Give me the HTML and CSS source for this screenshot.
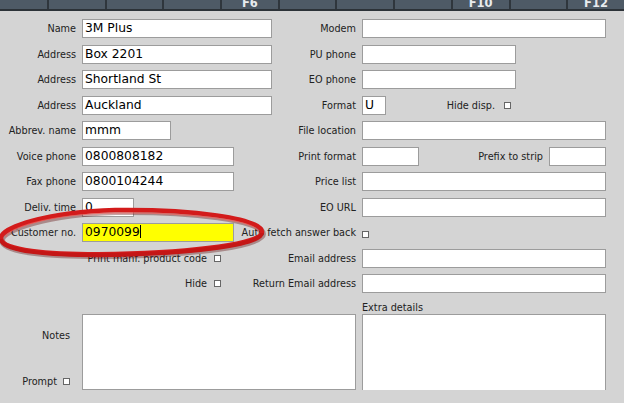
FILE: index.html
```html
<!DOCTYPE html>
<html lang="en">
<head>
    <meta charset="UTF-8">
    <title>Supplier details</title>
    <link rel="stylesheet" href="styles.css">
</head>
<body>
    <div class="fkeys">
        <div class="fkey"></div>
        <div class="fkey"></div>
        <div class="fkey"></div>
        <div class="fkey"></div>
        <div class="fkey"><span>F6</span></div>
        <div class="fkey"></div>
        <div class="fkey"></div>
        <div class="fkey"></div>
        <div class="fkey"><span>F10</span></div>
        <div class="fkey"></div>
        <div class="fkey"><span>F12</span></div>
    </div>

    <div class="page">
        <div class="row">
            <span class="label">Name</span>
            <div class="field w-long">3M Plus</div>
            <span class="label">Modem</span>
            <div class="field w-full"></div>
        </div>
        <div class="row">
            <span class="label">Address</span>
            <div class="field w-long">Box 2201</div>
            <span class="label">PU phone</span>
            <div class="field w-phone"></div>
        </div>
        <div class="row">
            <span class="label">Address</span>
            <div class="field w-long">Shortland St</div>
            <span class="label">EO phone</span>
            <div class="field w-phone"></div>
        </div>
        <div class="row">
            <span class="label">Address</span>
            <div class="field w-long">Auckland</div>
            <span class="label">Format</span>
            <div class="split">
                <div class="field w-tiny">U</div>
                <div class="check-group hide-disp">
                    <span class="label">Hide disp.</span>
                    <span class="check"></span>
                </div>
            </div>
        </div>
        <div class="row">
            <span class="label">Abbrev. name</span>
            <div class="field w-abbrev">mmm</div>
            <span class="label">File location</span>
            <div class="field w-full"></div>
        </div>
        <div class="row">
            <span class="label">Voice phone</span>
            <div class="field w-mid">0800808182</div>
            <span class="label">Print format</span>
            <div class="split">
                <div class="field w-small"></div>
                <div class="check-group">
                    <span class="label">Prefix to strip</span>
                    <div class="field w-small"></div>
                </div>
            </div>
        </div>
        <div class="row">
            <span class="label">Fax phone</span>
            <div class="field w-mid">0800104244</div>
            <span class="label">Price list</span>
            <div class="field w-full"></div>
        </div>
        <div class="row">
            <span class="label">Deliv. time</span>
            <div class="field w-deliv">0</div>
            <span class="label">EO URL</span>
            <div class="field w-full"></div>
        </div>
        <div class="row">
            <span class="label">Customer no.</span>
            <div class="field w-mid focused">0970099<span class="caret"></span></div>
            <span class="label">Auto fetch answer back</span>
            <div><span class="check"></span></div>
        </div>
        <div class="row">
            <div class="check-group left-check">
                <span class="label">Print manf. product code</span>
                <span class="check"></span>
            </div>
            <span class="label">Email address</span>
            <div class="field w-full"></div>
        </div>
        <div class="row">
            <div class="check-group left-check">
                <span class="label">Hide</span>
                <span class="check"></span>
            </div>
            <span class="label">Return Email address</span>
            <div class="field w-full"></div>
        </div>

        <div class="row row-head">
            <span class="label head-label">Extra details</span>
        </div>
        <div class="notes-row">
            <div class="notes-side">
                <span class="label">Notes</span>
                <div class="check-group">
                    <span class="label">Prompt</span>
                    <span class="check"></span>
                </div>
            </div>
            <textarea class="box" readonly></textarea>
            <textarea class="box" readonly></textarea>
        </div>

        <!-- red marker ring drawn over the customer number -->
        <svg class="mark" viewBox="0 190 270 80" width="270" height="80">
            <path class="ring-shadow" d="M 1,238 C 1,228 45,212 115,210 C 190,209 262,218 262,232 C 262,244 195,252 115,254 C 45,255 1,250 1,238 Z"/>
            <path class="ring" d="M 1,238 C 1,228 45,212 115,210 C 190,209 262,218 262,232 C 262,244 195,252 115,254 C 45,255 1,250 1,238 Z"/>
            <path class="ring-low" d="M 262,233 C 262,245 195,253 115,255 C 45,256 1,251 1,239"/>
            <path class="ring-shine" d="M 6,237 C 6,229 48,214 115,213 C 186,212 257,220 258,232"/>
        </svg>
    </div>
</body>
</html>
```

FILE: styles.css
```css
body {
    margin: 0;
    background: #d4d4d4;
    font-family: "DejaVu Sans", Verdana, sans-serif;
    color: #222;
}
.fkeys {
    display: flex;
    height: 9px;
    background: #4e5a66;
    border-bottom: 2px solid #2c3238;
    overflow: hidden;
}
.fkey {
    flex: 0 0 57.7px;
    box-sizing: border-box;
    border-right: 2px solid #2f363d;
    color: #e8ebee;
    font-weight: bold;
    font-size: 11.5px;
    line-height: 12px;
    text-align: center;
}
.fkey:first-child {
    flex-basis: 49px;
}
.fkey span {
    display: block;
    margin-top: -3px;
}
.page {
    position: relative;
    padding: 8px 18px 0 0;
}
.row {
    display: grid;
    grid-template-columns: 76px minmax(0, 1fr) auto 244px;
    column-gap: 6px;
    align-items: center;
    height: 19px;
    margin-bottom: 6.5px;
}
.label {
    font-size: 9.7px;
    text-align: right;
    white-space: nowrap;
}
.field {
    box-sizing: border-box;
    height: 19px;
    border: 1px solid #9c9c9c;
    background: #fff;
    color: #000;
    font-size: 12.3px;
    line-height: 17px;
    padding: 0 2px;
    white-space: nowrap;
    overflow: hidden;
}
.w-long { width: 190px; }
.w-mid { width: 152px; }
.w-abbrev { width: 89px; }
.w-deliv { width: 52px; }
.w-full { width: 244px; }
.w-phone { width: 154px; }
.w-tiny { width: 24px; }
.w-small { width: 57px; }
.focused {
    background: #ffff00;
}
.caret {
    display: inline-block;
    width: 1px;
    height: 13px;
    background: #000;
    vertical-align: -2px;
}
.split {
    display: flex;
    align-items: center;
    justify-content: space-between;
}
.check-group {
    display: flex;
    align-items: center;
    justify-content: flex-end;
    gap: 6px;
}
.hide-disp {
    margin-right: 95px;
    gap: 9px;
}
.left-check {
    grid-column: 2;
    width: 139px;
    gap: 7px;
}
.check {
    display: inline-block;
    box-sizing: border-box;
    width: 7px;
    height: 7px;
    border: 1px solid #666;
    background: #fff;
}
.row-head {
    height: 14.5px;
    margin-bottom: 0;
    align-items: end;
}
.head-label {
    grid-column: 4;
    text-align: left;
    line-height: 12px;
}
.notes-row {
    display: grid;
    grid-template-columns: 76px minmax(0, 1fr) 244px;
    column-gap: 6px;
    height: 76px;
}
.notes-side {
    display: flex;
    flex-direction: column;
    justify-content: space-between;
    align-items: flex-end;
    padding: 16px 6px 4px 0;
}
.box {
    box-sizing: border-box;
    margin: 0;
    height: 76px;
    border: 1px solid #9c9c9c;
    background: #fff;
    resize: none;
}
.box:last-child {
    height: 77px;
}
.mark {
    position: absolute;
    left: 0;
    top: 179px;
    overflow: visible;
}
.ring-shadow {
    fill: none;
    stroke: rgba(90, 0, 0, 0.35);
    stroke-width: 6;
    transform: translate(1px, 2px);
}
.ring {
    fill: none;
    stroke: #d31b1b;
    stroke-width: 4.5;
}
.ring-low {
    fill: none;
    stroke: #c41616;
    stroke-width: 4;
}
.ring-shine {
    fill: none;
    stroke: #f2605a;
    stroke-width: 1.2;
    opacity: 0.7;
}
```
